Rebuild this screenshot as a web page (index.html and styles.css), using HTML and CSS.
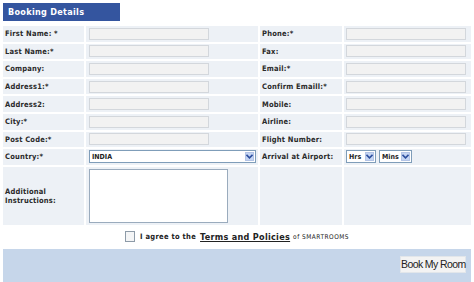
FILE: index.html
```html
<!DOCTYPE html>
<html lang="en">
<head>
    <meta charset="UTF-8">
    <title>Booking Details</title>
    <link rel="stylesheet" href="styles.css">
</head>
<body>
    <div class="booking">
        <div class="tab">Booking Details</div>

        <div class="form-grid">
            <div class="cell label">First Name: *</div>
            <div class="cell"><span class="field"></span></div>
            <div class="cell label">Phone:*</div>
            <div class="cell right"><span class="field"></span></div>

            <div class="cell label">Last Name:*</div>
            <div class="cell"><span class="field"></span></div>
            <div class="cell label">Fax:</div>
            <div class="cell right"><span class="field"></span></div>

            <div class="cell label">Company:</div>
            <div class="cell"><span class="field"></span></div>
            <div class="cell label">Email:*</div>
            <div class="cell right"><span class="field"></span></div>

            <div class="cell label">Address1:*</div>
            <div class="cell"><span class="field"></span></div>
            <div class="cell label">Confirm Emaill:*</div>
            <div class="cell right"><span class="field"></span></div>

            <div class="cell label">Address2:</div>
            <div class="cell"><span class="field"></span></div>
            <div class="cell label">Mobile:</div>
            <div class="cell right"><span class="field"></span></div>

            <div class="cell label">City:*</div>
            <div class="cell"><span class="field"></span></div>
            <div class="cell label">Airline:</div>
            <div class="cell right"><span class="field"></span></div>

            <div class="cell label">Post Code:*</div>
            <div class="cell"><span class="field"></span></div>
            <div class="cell label">Flight Number:</div>
            <div class="cell right"><span class="field"></span></div>

            <div class="cell label">Country:*</div>
            <div class="cell">
                <span class="select country">
                    <span class="select-text">INDIA</span>
                    <span class="select-btn"><svg width="7" height="5" viewBox="0 0 7 5"><path d="M0.5 0.8 L3.5 3.8 L6.5 0.8" fill="none" stroke="#2d4f9e" stroke-width="1.6"/></svg></span>
                </span>
            </div>
            <div class="cell label">Arrival at Airport:</div>
            <div class="cell right times">
                <span class="select hrs">
                    <span class="select-text">Hrs</span>
                    <span class="select-btn"><svg width="7" height="5" viewBox="0 0 7 5"><path d="M0.5 0.8 L3.5 3.8 L6.5 0.8" fill="none" stroke="#2d4f9e" stroke-width="1.6"/></svg></span>
                </span>
                <span class="select mins">
                    <span class="select-text">Mins</span>
                    <span class="select-btn"><svg width="7" height="5" viewBox="0 0 7 5"><path d="M0.5 0.8 L3.5 3.8 L6.5 0.8" fill="none" stroke="#2d4f9e" stroke-width="1.6"/></svg></span>
                </span>
            </div>

            <div class="cell label">Additional<br>Instructions:</div>
            <div class="cell"><span class="notes"></span></div>
            <div class="cell"></div>
            <div class="cell"></div>
        </div>

        <div class="agree">
            <span class="checkbox"></span>
            <span class="agree-text">I agree to the</span>
            <a class="terms" href="#">Terms and Policies</a>
            <span class="agree-small">of SMARTROOMS</span>
        </div>

        <div class="footer">
            <button class="book">Book My Room</button>
        </div>
    </div>
</body>
</html>
```

FILE: styles.css
```css
body {
    margin: 0;
    padding: 0;
    background: #fff;
    font-family: "DejaVu Sans Condensed", "DejaVu Sans", sans-serif;
    color: #222;
}

.booking {
    width: 468px;
    margin: 3px 0 0 3px;
}

.tab {
    width: 117px;
    height: 18px;
    box-sizing: border-box;
    padding: 4px 0 0 5px;
    background: #34559f;
    color: #fff;
    font-weight: bold;
    font-size: 9px;
    letter-spacing: 0.3px;
}

.form-grid {
    display: grid;
    grid-template-columns: 81px 172px 82px 127px;
    grid-template-rows: repeat(8, 15.6px) 58px;
    gap: 2px;
    margin-top: 5px;
}

.cell {
    background: #edf1f6;
    display: flex;
    align-items: center;
    padding-left: 3px;
}

.cell.right {
    padding-left: 2px;
}

.label {
    padding-left: 2px;
    font-weight: bold;
    font-size: 7.5px;
    letter-spacing: 0.2px;
    color: #2a2a2a;
}

.field {
    display: block;
    width: 118px;
    height: 10px;
    background: #f2f2f2;
    border: 1px solid #d3d7dc;
}

.notes {
    display: block;
    width: 137px;
    height: 52px;
    background: #fff;
    border: 1px solid #9aabbd;
}

.select {
    display: flex;
    align-items: center;
    height: 13px;
    box-sizing: border-box;
    background: #fff;
    border: 1px solid #7f9db9;
    font-weight: bold;
    font-size: 7px;
    color: #222;
}

.select-text {
    flex: 1;
    padding-left: 2px;
}

.select-btn {
    width: 9px;
    height: 9px;
    margin-right: 1px;
    background: #c5d5f3;
    border: 1px solid #b3c4e6;
    box-sizing: border-box;
    display: flex;
    align-items: center;
    justify-content: center;
}

.country {
    width: 167px;
}

.times {
    gap: 3px;
}

.hrs {
    width: 30px;
}

.mins {
    width: 33px;
}

.agree {
    height: 24px;
    display: flex;
    align-items: center;
    justify-content: center;
    gap: 4px;
    font-weight: bold;
    font-size: 7.5px;
    letter-spacing: 0.3px;
}

.checkbox {
    width: 8px;
    height: 9px;
    border: 1px solid #8e9ba8;
    background: #f4f5f6;
    margin-right: 1px;
}

.terms {
    color: #222;
    font-size: 9px;
    text-decoration: underline;
}

.agree-small {
    font-size: 6.5px;
    font-weight: normal;
    margin-left: -1px;
    letter-spacing: 0.5px;
}

.footer {
    height: 33px;
    background: #c6d6ea;
    display: flex;
    justify-content: flex-end;
    align-items: flex-start;
    padding: 7px 5px 0 0;
    box-sizing: border-box;
}

.book {
    width: 66px;
    height: 17px;
    padding: 0;
    border: 1px solid #e2e6ea;
    background: #f3f3f3;
    font-family: "Liberation Sans", Arial, sans-serif;
    font-size: 10.5px;
    letter-spacing: -0.6px;
    white-space: nowrap;
    color: #222;
}
```
